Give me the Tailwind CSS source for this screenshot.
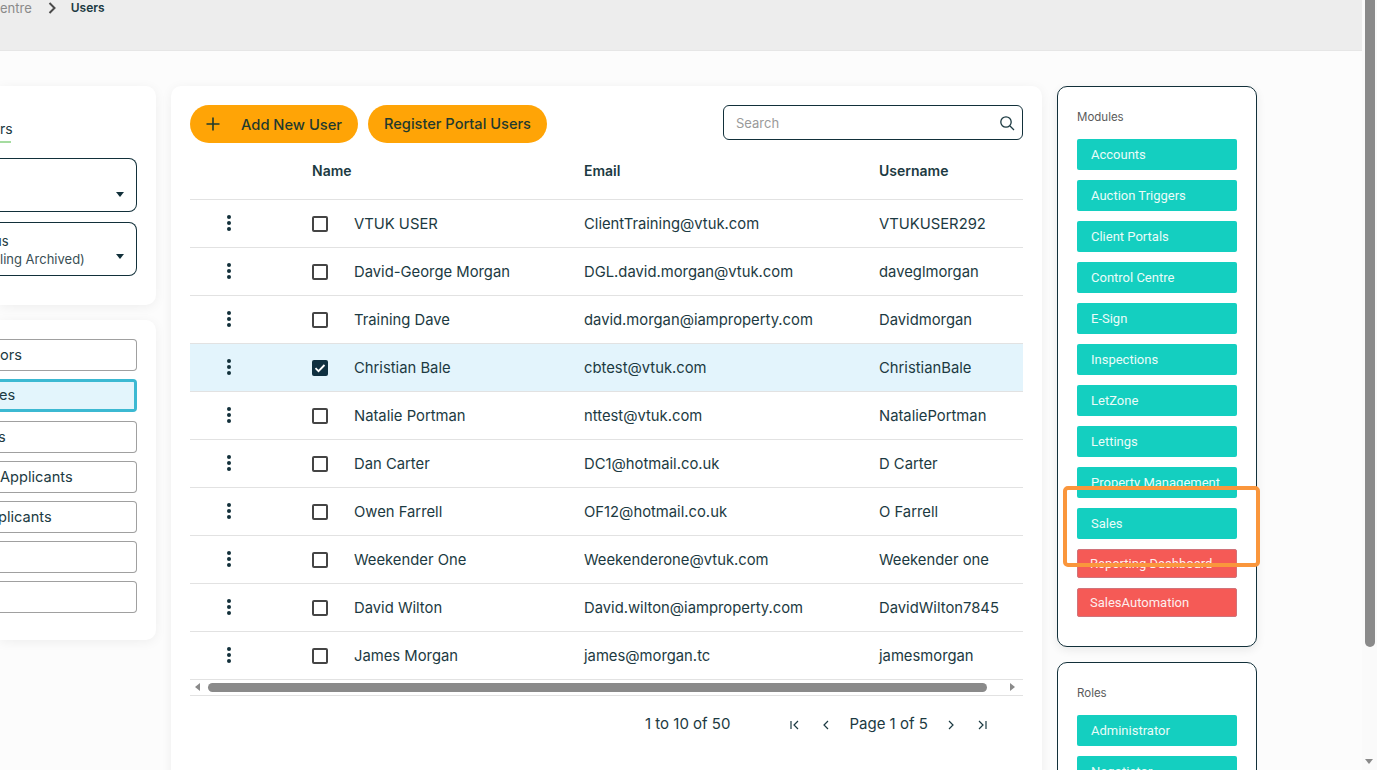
<!DOCTYPE html>
<html lang="en">
<head>
    <meta charset="UTF-8">
    <title>Users</title>
    <script src="https://cdn.jsdelivr.net/npm/@tailwindcss/browser@4"></script>
</head>
<body class="font-['Inter',sans-serif] text-[#1c3a42]">
<div class="relative flex h-[770px] w-[1377px] overflow-hidden bg-[#fcfcfc]">
    <div class="w-[1362px] shrink-0">
        <!-- breadcrumb -->
        <div class="flex h-[51px] items-start border-b border-[#e6e6e6] bg-[#ededed] text-[13px] leading-[16px]">
            <span class="text-[#8a8a8a]">entre</span>
            <svg class="ml-[16px] mt-[2px] h-[12px] w-[8px]" viewBox="0 0 8 12" fill="none" stroke="#4a4a4a" stroke-width="2"><path d="M1.5 1l5 5-5 5"/></svg>
            <span class="ml-[15px] text-[12px] font-semibold">Users</span>
        </div>

        <div class="flex gap-[15px] pt-[35px]">
            <!-- left column -->
            <div class="flex w-[156px] shrink-0 flex-col gap-[15px]">
                <div class="h-[219px] rounded-r-[10px] bg-white pr-[19px] pt-[35px] shadow-[0_2px_12px_rgba(0,0,0,0.06)]">
                    <div class="h-[22px] w-[11px] border-b-2 border-[#a5dca0] text-[14px] leading-[16px]">rs</div>
                    <div class="relative mt-[15px] h-[54px] rounded-r-lg border border-l-0 border-[#12303a]">
                        <span class="absolute right-[12px] top-[33px] h-0 w-0 border-x-[4px] border-t-[5px] border-x-transparent border-t-[#12303a]"></span>
                    </div>
                    <div class="relative mt-[10px] h-[54px] overflow-hidden rounded-r-lg border border-l-0 border-[#12303a] pt-[9px] text-[13px] leading-[18px]">
                        <div class="-ml-[6px]">us</div>
                        <div class="text-[#3a4f55]">ling Archived)</div>
                        <span class="absolute right-[12px] top-[31px] h-0 w-0 border-x-[4px] border-t-[5px] border-x-transparent border-t-[#12303a]"></span>
                    </div>
                </div>
                <div class="flex h-[320px] flex-col rounded-r-[10px] bg-white pr-[19px] pt-[19px] text-[14.6px] shadow-[0_2px_12px_rgba(0,0,0,0.06)]">
                    <div class="flex h-[32px] items-center rounded-r border border-l-0 border-[#a0a0a0] pt-[1px]">ors</div>
                    <div class="mt-[8px] flex h-[33px] items-center overflow-hidden rounded-r border-[3px] border-l-0 border-[#3cb9d2] bg-[#e3f5fc] pt-[1px]"><span class="-ml-[1px]">es</span></div>
                    <div class="mt-[9px] flex h-[32px] items-center overflow-hidden rounded-r border border-l-0 border-[#a0a0a0] pt-[1px]"><span class="-ml-[2px]">s</span></div>
                    <div class="mt-[8px] flex h-[32px] items-center rounded-r border border-l-0 border-[#a0a0a0] pt-[1px]">Applicants</div>
                    <div class="mt-[8px] flex h-[32px] items-center overflow-hidden rounded-r border border-l-0 border-[#a0a0a0] pt-[1px]"><span class="-ml-[2px]">plicants</span></div>
                    <div class="mt-[8px] h-[32px] rounded-r border border-l-0 border-[#a0a0a0]"></div>
                    <div class="mt-[8px] h-[32px] rounded-r border border-l-0 border-[#a0a0a0]"></div>
                </div>
            </div>

            <!-- users table -->
            <div class="h-[700px] w-[871px] shrink-0 rounded-[10px] bg-white px-[19px] pt-[19px] shadow-[0_2px_12px_rgba(0,0,0,0.06)]">
                <div class="flex items-start">
                    <button class="flex h-[38px] w-[168px] items-center rounded-full bg-[#ffa406] pl-[16px] text-[14.7px] font-medium text-[#1f3a2e]">
                        <svg class="h-[14px] w-[14px]" viewBox="0 0 14 14" stroke="#1f3a2e" stroke-width="1.6"><path d="M7 0.5v13M0.5 7h13"/></svg>
                        <span class="ml-[21px] mt-[2px]">Add New User</span>
                    </button>
                    <button class="ml-[10px] h-[38px] w-[179px] rounded-full bg-[#ffa406] pt-[2px] text-[14.6px] font-medium text-[#1f3a2e]">Register Portal Users</button>
                    <div class="ml-auto flex h-[35px] w-[300px] items-center justify-between rounded-[6px] border border-[#12303a] pl-[12px] pr-[7px]">
                        <span class="pt-[2px] text-[13px] text-[#9a9a9a]">Search</span>
                        <svg class="h-[16px] w-[16px]" viewBox="0 0 16 16" fill="none" stroke="#1c3a42" stroke-width="1.3"><circle cx="7" cy="7" r="5.2"/><path d="M11 11l4 4"/></svg>
                    </div>
                </div>

                <table class="w-[833px] table-fixed border-collapse text-[14.8px]">
                    <colgroup>
                        <col class="w-[122px]"><col class="w-[42px]"><col class="w-[230px]"><col class="w-[295px]"><col class="w-[144px]">
                    </colgroup>
                    <thead>
                        <tr class="h-[56px] border-b border-[#e2e2e2] text-left text-[14px]">
                            <th></th>
                            <th colspan="2" class="font-semibold">Name</th>
                            <th class="font-semibold">Email</th>
                            <th class="font-semibold">Username</th>
                        </tr>
                    </thead>
                    <tbody class="[&_td]:pt-[2px]">
                        <tr class="h-[48px] border-b border-[#e2e2e2]">
                            <td class="pl-[36px] !pt-0"><svg class="h-[16px] w-[6px]" viewBox="0 0 6 16" fill="#12303a"><circle cx="3" cy="2" r="2"/><circle cx="3" cy="8" r="2"/><circle cx="3" cy="14" r="2"/></svg></td>
                            <td><div class="h-[16px] w-[16px] rounded-[2px] border-2 border-[#444]"></div></td>
                            <td>VTUK USER</td><td>ClientTraining@vtuk.com</td><td>VTUKUSER292</td>
                        </tr>
                        <tr class="h-[48px] border-b border-[#e2e2e2]">
                            <td class="pl-[36px] !pt-0"><svg class="h-[16px] w-[6px]" viewBox="0 0 6 16" fill="#12303a"><circle cx="3" cy="2" r="2"/><circle cx="3" cy="8" r="2"/><circle cx="3" cy="14" r="2"/></svg></td>
                            <td><div class="h-[16px] w-[16px] rounded-[2px] border-2 border-[#444]"></div></td>
                            <td>David-George Morgan</td><td>DGL.david.morgan@vtuk.com</td><td>daveglmorgan</td>
                        </tr>
                        <tr class="h-[48px] border-b border-[#e2e2e2]">
                            <td class="pl-[36px] !pt-0"><svg class="h-[16px] w-[6px]" viewBox="0 0 6 16" fill="#12303a"><circle cx="3" cy="2" r="2"/><circle cx="3" cy="8" r="2"/><circle cx="3" cy="14" r="2"/></svg></td>
                            <td><div class="h-[16px] w-[16px] rounded-[2px] border-2 border-[#444]"></div></td>
                            <td>Training Dave</td><td>david.morgan@iamproperty.com</td><td>Davidmorgan</td>
                        </tr>
                        <tr class="h-[48px] border-b border-[#e2e2e2] bg-[#e3f4fc]">
                            <td class="pl-[36px] !pt-0"><svg class="h-[16px] w-[6px]" viewBox="0 0 6 16" fill="#12303a"><circle cx="3" cy="2" r="2"/><circle cx="3" cy="8" r="2"/><circle cx="3" cy="14" r="2"/></svg></td>
                            <td><svg class="block h-[16px] w-[16px]" viewBox="0 0 16 16"><rect width="16" height="16" rx="2" fill="#0f3040"/><path d="M3.5 8.2l3 3 6-6.2" fill="none" stroke="#fff" stroke-width="1.8"/></svg></td>
                            <td>Christian Bale</td><td>cbtest@vtuk.com</td><td>ChristianBale</td>
                        </tr>
                        <tr class="h-[48px] border-b border-[#e2e2e2]">
                            <td class="pl-[36px] !pt-0"><svg class="h-[16px] w-[6px]" viewBox="0 0 6 16" fill="#12303a"><circle cx="3" cy="2" r="2"/><circle cx="3" cy="8" r="2"/><circle cx="3" cy="14" r="2"/></svg></td>
                            <td><div class="h-[16px] w-[16px] rounded-[2px] border-2 border-[#444]"></div></td>
                            <td>Natalie Portman</td><td>nttest@vtuk.com</td><td>NataliePortman</td>
                        </tr>
                        <tr class="h-[48px] border-b border-[#e2e2e2]">
                            <td class="pl-[36px] !pt-0"><svg class="h-[16px] w-[6px]" viewBox="0 0 6 16" fill="#12303a"><circle cx="3" cy="2" r="2"/><circle cx="3" cy="8" r="2"/><circle cx="3" cy="14" r="2"/></svg></td>
                            <td><div class="h-[16px] w-[16px] rounded-[2px] border-2 border-[#444]"></div></td>
                            <td>Dan Carter</td><td>DC1@hotmail.co.uk</td><td>D Carter</td>
                        </tr>
                        <tr class="h-[48px] border-b border-[#e2e2e2]">
                            <td class="pl-[36px] !pt-0"><svg class="h-[16px] w-[6px]" viewBox="0 0 6 16" fill="#12303a"><circle cx="3" cy="2" r="2"/><circle cx="3" cy="8" r="2"/><circle cx="3" cy="14" r="2"/></svg></td>
                            <td><div class="h-[16px] w-[16px] rounded-[2px] border-2 border-[#444]"></div></td>
                            <td>Owen Farrell</td><td>OF12@hotmail.co.uk</td><td>O Farrell</td>
                        </tr>
                        <tr class="h-[48px] border-b border-[#e2e2e2]">
                            <td class="pl-[36px] !pt-0"><svg class="h-[16px] w-[6px]" viewBox="0 0 6 16" fill="#12303a"><circle cx="3" cy="2" r="2"/><circle cx="3" cy="8" r="2"/><circle cx="3" cy="14" r="2"/></svg></td>
                            <td><div class="h-[16px] w-[16px] rounded-[2px] border-2 border-[#444]"></div></td>
                            <td>Weekender One</td><td>Weekenderone@vtuk.com</td><td>Weekender one</td>
                        </tr>
                        <tr class="h-[48px] border-b border-[#e2e2e2]">
                            <td class="pl-[36px] !pt-0"><svg class="h-[16px] w-[6px]" viewBox="0 0 6 16" fill="#12303a"><circle cx="3" cy="2" r="2"/><circle cx="3" cy="8" r="2"/><circle cx="3" cy="14" r="2"/></svg></td>
                            <td><div class="h-[16px] w-[16px] rounded-[2px] border-2 border-[#444]"></div></td>
                            <td>David Wilton</td><td>David.wilton@iamproperty.com</td><td>DavidWilton7845</td>
                        </tr>
                        <tr class="h-[48px] border-b border-[#e2e2e2]">
                            <td class="pl-[36px] !pt-0"><svg class="h-[16px] w-[6px]" viewBox="0 0 6 16" fill="#12303a"><circle cx="3" cy="2" r="2"/><circle cx="3" cy="8" r="2"/><circle cx="3" cy="14" r="2"/></svg></td>
                            <td><div class="h-[16px] w-[16px] rounded-[2px] border-2 border-[#444]"></div></td>
                            <td>James Morgan</td><td>james@morgan.tc</td><td>jamesmorgan</td>
                        </tr>
                    </tbody>
                </table>

                <!-- horizontal scrollbar -->
                <div class="flex h-[16px] items-center border-b border-[#e2e2e2] pl-[5px] pr-[8px]">
                    <span class="h-0 w-0 border-y-[4px] border-r-[5px] border-y-transparent border-r-[#8a8a8a]"></span>
                    <div class="ml-[8px] h-[9px] w-[779px] rounded-full bg-[#8a8a8a]"></div>
                    <span class="ml-auto h-0 w-0 border-y-[4px] border-l-[5px] border-y-transparent border-l-[#8a8a8a]"></span>
                </div>

                <!-- pagination -->
                <div class="mt-[19px] flex h-[20px] items-center pl-[455px] text-[15px]">
                    <span>1 to 10 of 50</span>
                    <svg class="ml-[59px] h-[10px] w-[12px]" viewBox="0 0 12 10" fill="none" stroke="#1c3a42" stroke-width="1.2"><path d="M2 1v8M9 1L5 5l4 4"/></svg>
                    <svg class="ml-[22px] h-[10px] w-[6px]" viewBox="0 0 6 10" fill="none" stroke="#1c3a42" stroke-width="1.2"><path d="M5 1L1 5l4 4"/></svg>
                    <span class="ml-[20px]">Page 1 of 5</span>
                    <svg class="ml-[20px] h-[10px] w-[6px]" viewBox="0 0 6 10" fill="none" stroke="#1c3a42" stroke-width="1.2"><path d="M1 1l4 4-4 4"/></svg>
                    <svg class="ml-[22px] h-[10px] w-[12px]" viewBox="0 0 12 10" fill="none" stroke="#1c3a42" stroke-width="1.2"><path d="M3 1l4 4-4 4M10 1v8"/></svg>
                </div>
            </div>

            <!-- right column -->
            <div class="flex w-[200px] shrink-0 flex-col gap-[15px] font-['Roboto',sans-serif] text-[13px] font-normal text-[#eafcf9]">
                <div class="flex h-[561px] flex-col rounded-[10px] border border-[#12303a] bg-white px-[19px] pt-[22px] shadow-[0_3px_10px_rgba(0,0,0,0.08)]">
                    <div class="h-[30px] font-['Inter',sans-serif] text-[11.5px] font-normal leading-[16px] text-[#5a5a5a]">Modules</div>
                    <div class="flex flex-col gap-[10px]">
                        <div class="flex h-[31px] items-center rounded-[2px] bg-[#14cfc0] pl-[14px]">Accounts</div>
                        <div class="flex h-[31px] items-center rounded-[2px] bg-[#14cfc0] pl-[14px]">Auction Triggers</div>
                        <div class="flex h-[31px] items-center rounded-[2px] bg-[#14cfc0] pl-[14px]">Client Portals</div>
                        <div class="flex h-[31px] items-center rounded-[2px] bg-[#14cfc0] pl-[14px]">Control Centre</div>
                        <div class="flex h-[31px] items-center rounded-[2px] bg-[#14cfc0] pl-[14px]">E-Sign</div>
                        <div class="flex h-[31px] items-center rounded-[2px] bg-[#14cfc0] pl-[14px]">Inspections</div>
                        <div class="flex h-[31px] items-center rounded-[2px] bg-[#14cfc0] pl-[14px]">LetZone</div>
                        <div class="flex h-[31px] items-center rounded-[2px] bg-[#14cfc0] pl-[14px]">Lettings</div>
                        <div class="flex h-[31px] items-center rounded-[2px] bg-[#14cfc0] pl-[14px]">Property Management</div>
                        <div class="flex h-[31px] items-center rounded-[2px] bg-[#14cfc0] pl-[14px]">Sales</div>
                        <div class="flex h-[29px] items-center rounded-[2px] border border-[#d0737a] bg-[#f55a56] pl-[12px] text-[#fdeeee]">Reporting Dashboard</div>
                        <div class="flex h-[29px] items-center rounded-[2px] border border-[#d0737a] bg-[#f55a56] pl-[12px] text-[#fdeeee]">SalesAutomation</div>
                    </div>
                </div>
                <div class="flex h-[200px] flex-col rounded-[10px] border border-[#12303a] bg-white px-[19px] pt-[22px]">
                    <div class="h-[30px] font-['Inter',sans-serif] text-[11.5px] font-normal leading-[16px] text-[#5a5a5a]">Roles</div>
                    <div class="flex flex-col gap-[10px]">
                        <div class="flex h-[31px] items-center rounded-[2px] bg-[#14cfc0] pl-[14px]">Administrator</div>
                        <div class="flex h-[31px] items-center rounded-[2px] bg-[#14cfc0] pl-[14px]">Negotiator</div>
                    </div>
                </div>
            </div>
        </div>
    </div>

    <!-- page scrollbar -->
    <div class="relative w-[15px] shrink-0 bg-[#fafafa]">
        <div class="ml-[3px] h-[647px] w-[10px] rounded-b-full bg-[#8a8a8a]"></div>
        <span class="absolute bottom-[6px] left-[3px] h-0 w-0 border-x-[4px] border-t-[5px] border-x-transparent border-t-[#8a8a8a]"></span>
    </div>

    <!-- orange highlight over the Sales module -->
    <div class="absolute left-[1063px] top-[486px] h-[81px] w-[197px] rounded-[5px] border-4 border-[#fa963c]"></div>
</div>
</body>
</html>
